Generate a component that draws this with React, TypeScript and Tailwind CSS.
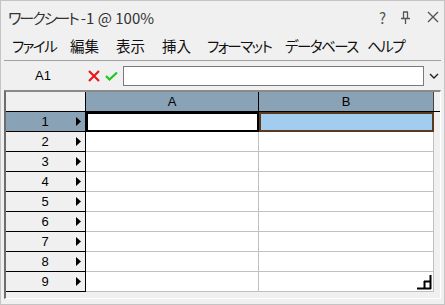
import React from 'react';

const rows = [1, 2, 3, 4, 5, 6, 7, 8, 9];

const menus = [
    { label: 'ファイル', w: 'w-[58px]', kana: true },
    { label: '編集', w: 'w-[46px]', kana: false },
    { label: '表示', w: 'w-[46px]', kana: false },
    { label: '挿入', w: 'w-[45px]', kana: false },
    { label: 'フォーマット', w: 'w-[78px]', kana: true },
    { label: 'データベース', w: 'w-[82px]', kana: true },
    { label: 'ヘルプ', w: 'w-[60px]', kana: true },
];

function RowArrow() {
    return (
        <svg width="5" height="9" viewBox="0 0 5 9" className="block">
            <path d="M0 0 L5 4.5 L0 9 Z" fill="#000" />
        </svg>
    );
}

function ResizeMark() {
    return (
        <svg width="15" height="15" viewBox="0 0 15 15" className="block">
            <path d="M0 13.5 H14" stroke="#000" strokeWidth="2" />
            <path d="M13.5 0 V14" stroke="#000" strokeWidth="2" />
            <path d="M7.5 6 V13 M7 6.5 H13" stroke="#000" strokeWidth="2" />
        </svg>
    );
}

function App() {
    const jp = 'font-["Noto_Sans_CJK_JP",sans-serif] [font-feature-settings:"palt"]';
    const grid = 'font-["Liberation_Sans",Arial,sans-serif]';

    return (
        <div className="w-[445px] h-[305px] bg-[#f0f0f0] border border-[#c4c4c4] flex flex-col overflow-hidden">
            {/* title bar */}
            <div className={`h-[32px] flex items-center justify-between pl-[7px] pr-[5px] text-[#333] ${jp}`}>
                <span className="text-[15px] leading-none">
                    <span className="tracking-[-2px] mr-[3px]">ワークシート</span>-1 @ 100%
                </span>
                <div className="flex items-center gap-[14px] text-[#555]">
                    <span className="text-[15px] leading-none">?</span>
                    <svg width="11" height="13" viewBox="0 0 11 13">
                        <path d="M3 1 H8 M3.5 1 V7 M7.5 1 V7 M1 7.5 H10 M5.5 8 V13" stroke="#555" strokeWidth="1.3" fill="none" />
                    </svg>
                    <svg width="12" height="12" viewBox="0 0 12 12" className="ml-[2px]">
                        <path d="M1 1 L11 11 M11 1 L1 11" stroke="#555" strokeWidth="1.4" />
                    </svg>
                </div>
            </div>

            <div className="flex-1 flex flex-col px-[3px] pb-[5px]">
                {/* menu bar */}
                <div className={`h-[28px] flex items-center pl-[8px] border-b border-[#a0a0a0] text-[14.5px] text-[#111] ${jp}`}>
                    {menus.map((m) => (
                        <span key={m.label} className={`${m.w} leading-none ${m.kana ? 'tracking-[-1.5px]' : ''}`}>{m.label}</span>
                    ))}
                </div>

                {/* formula bar */}
                <div className="h-[29px] flex items-center">
                    <div className={`w-[78px] text-center text-[13px] text-black ${grid}`}>A1</div>
                    <svg width="12" height="12" viewBox="0 0 12 12" className="ml-[6px]">
                        <path d="M1 1 L11 11 M11 1 L1 11" stroke="#e81818" strokeWidth="2.2" />
                    </svg>
                    <svg width="13" height="10" viewBox="0 0 13 10" className="ml-[5px]">
                        <path d="M1 5 L4.5 8.5 L12 1.5" stroke="#1ec81e" strokeWidth="2.2" fill="none" />
                    </svg>
                    <div className="ml-[5px] w-[301px] h-[20px] bg-white border border-[#7a7a7a]" />
                    <svg width="10" height="6" viewBox="0 0 10 6" className="ml-[5px]">
                        <path d="M1 1 L5 5 L9 1" stroke="#222" strokeWidth="1.4" fill="none" />
                    </svg>
                </div>

                {/* grid */}
                <div className={`flex-1 border-l-2 border-t-2 border-l-[#6d6d6d] border-t-[#8a8a8a] border-r border-b border-r-white border-b-white bg-[#f0f0f0] ${grid} text-[13px] text-black`}>
                    <div className="flex h-[20px] border-b border-black">
                        <div className="w-[80px] border-r border-black bg-[#f0f0f0]" />
                        <div className="w-[173px] border-r border-black bg-[#8aa2b5] flex items-center justify-center">A</div>
                        <div className="w-[175px] border-r border-[#444] bg-[#8aa2b5] flex items-center justify-center">B</div>
                    </div>
                    {rows.map((r) => (
                        <div key={r} className="flex h-[20px]">
                            <div
                                className={`w-[80px] border-r border-b border-black flex items-center ${r === 1 ? 'bg-[#8aa2b5]' : 'bg-[#f0f0f0]'}`}
                            >
                                <span className="flex-1 text-center pl-[8px]">{r}</span>
                                <span className="pr-[4px]"><RowArrow /></span>
                            </div>
                            {r === 1 ? (
                                <>
                                    <div className="w-[173px] bg-white border-2 border-black" />
                                    <div className="w-[175px] bg-[#a3cdef] border-2 border-[#5a3a1e]" />
                                </>
                            ) : (
                                <>
                                    <div className="w-[173px] bg-white border-r border-b border-[#c0c0c0]" />
                                    <div className="w-[175px] bg-white border-r border-b border-[#c0c0c0] flex items-end justify-end pr-[1px] pb-[1px]">
                                        {r === 9 && <ResizeMark />}
                                    </div>
                                </>
                            )}
                        </div>
                    ))}
                </div>
            </div>
        </div>
    );
}

export default App;
